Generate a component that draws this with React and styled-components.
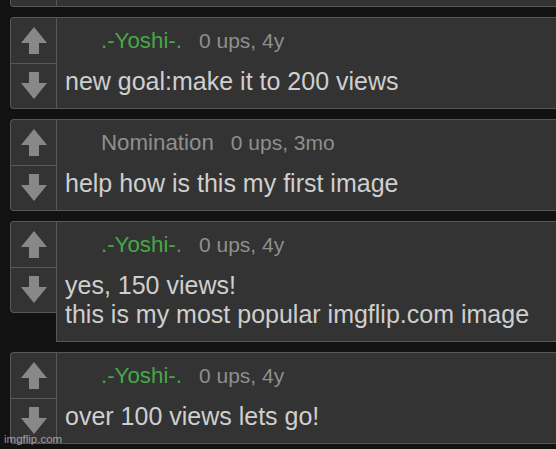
import React from "react";
import styled, { createGlobalStyle } from "styled-components";

const Global = createGlobalStyle`
  html, body {
    margin: 0;
    padding: 0;
    background: #121212;
    overflow: hidden;
  }
  body {
    font-family: "Liberation Sans", Arial, sans-serif;
  }
`;

const Page = styled.div`
  position: relative;
  width: 556px;
  height: 449px;
  overflow: hidden;
  background: #121212;
`;

const List = styled.div`
  display: flex;
  flex-direction: column;
  gap: 10px;
  margin-top: -85px;
  padding-left: 10px;
  width: 640px;
`;

const Row = styled.div`
  display: flex;
  align-items: flex-start;
`;

const VoteCol = styled.div`
  box-sizing: border-box;
  width: 46px;
  height: 92px;
  display: flex;
  flex-direction: column;
  border: 1px solid #575757;
  border-right: none;
  border-radius: 4px 0 0 4px;
  background: #333333;
  flex-shrink: 0;
`;

const VoteCell = styled.div`
  flex: 1;
  display: flex;
  align-items: center;
  justify-content: center;
  padding-left: 1px;
  border-top: ${(p) => (p.$divided ? "1px solid #575757" : "none")};
`;

const Body = styled.div`
  box-sizing: border-box;
  flex: 1;
  min-height: 92px;
  background: #333333;
  border: 1px solid #575757;
  border-right: none;
  padding: 11px 0 12px 0;
`;

const Meta = styled.div`
  display: flex;
  align-items: baseline;
  height: 24px;
  line-height: 24px;
  padding-left: 44px;
  margin-bottom: 14px;
  white-space: nowrap;
`;

const User = styled.span`
  font-size: 22.3px;
  color: ${(p) => (p.$green ? "#45a847" : "#8f8f8f")};
  margin-right: 17px;
`;

const Info = styled.span`
  font-size: 21px;
  color: #8f8f8f;
`;

const Text = styled.div`
  font-size: 25px;
  line-height: 29px;
  color: #cfcfcf;
  padding-left: 8px;
  white-space: pre-line;
`;

const Watermark = styled.div`
  position: absolute;
  left: 4px;
  bottom: 3px;
  font-size: 11.5px;
  font-family: "Liberation Sans", Arial, sans-serif;
  color: rgba(255, 255, 255, 0.55);
  line-height: 14px;
`;

const Arrow = ({ down }) => (
  <svg
    width="26"
    height="27"
    viewBox="0 0 26 27"
    style={down ? { transform: "rotate(180deg)" } : undefined}
  >
    <polygon points="13,0 26,16 18,16 18,27 8,27 8,16 0,16" fill="#888888" />
  </svg>
);

const comments = [
  { user: "", green: true, info: "", text: "\u00a0" },
  { user: ".-Yoshi-.", green: true, info: "0 ups, 4y", text: "new goal:make it to 200 views" },
  { user: "Nomination", green: false, info: "0 ups, 3mo", text: "help how is this my first image" },
  {
    user: ".-Yoshi-.",
    green: true,
    info: "0 ups, 4y",
    text: "yes, 150 views!\nthis is my most popular imgflip.com image",
  },
  { user: ".-Yoshi-.", green: true, info: "0 ups, 4y", text: "over 100 views lets go!" },
];

export default function App() {
  return (
    <Page>
      <Global />
      <List>
        {comments.map((c, i) => (
          <Row key={i}>
            <VoteCol>
              <VoteCell>
                <Arrow />
              </VoteCell>
              <VoteCell $divided>
                <Arrow down />
              </VoteCell>
            </VoteCol>
            <Body>
              <Meta>
                <User $green={c.green}>{c.user}</User>
                <Info>{c.info}</Info>
              </Meta>
              <Text>{c.text}</Text>
            </Body>
          </Row>
        ))}
      </List>
      <Watermark>imgflip.com</Watermark>
    </Page>
  );
}
